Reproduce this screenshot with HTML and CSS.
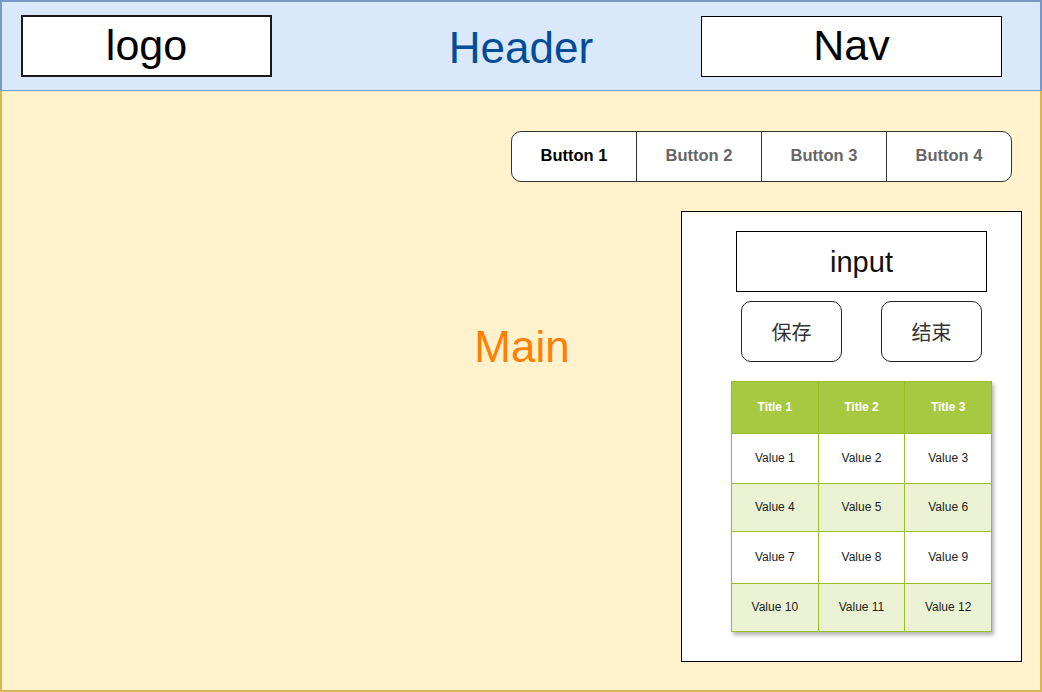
FILE: index.html
```html
<!DOCTYPE html>
<html lang="zh">
<head>
<meta charset="utf-8">
<title>Layout</title>
<link rel="stylesheet" href="styles.css">
</head>
<body>
<div class="page">
  <header class="header">
    <div class="logo">logo</div>
    <div class="title">Header</div>
    <div class="nav">Nav</div>
  </header>
  <main class="main">
    <div class="btn-group">
      <div class="seg seg-active">Button 1</div>
      <div class="seg">Button 2</div>
      <div class="seg">Button 3</div>
      <div class="seg">Button 4</div>
    </div>
    <div class="main-label">Main</div>
    <section class="panel">
      <div class="input">input</div>
      <div class="actions">
        <div class="action">保存</div>
        <div class="action">结束</div>
      </div>
      <table class="grid">
        <thead>
          <tr class="r-head"><th>Title 1</th><th>Title 2</th><th>Title 3</th></tr>
        </thead>
        <tbody>
          <tr class="r1"><td>Value 1</td><td>Value 2</td><td>Value 3</td></tr>
          <tr class="r2 alt"><td>Value 4</td><td>Value 5</td><td>Value 6</td></tr>
          <tr class="r3"><td>Value 7</td><td>Value 8</td><td>Value 9</td></tr>
          <tr class="r4 alt"><td>Value 10</td><td>Value 11</td><td>Value 12</td></tr>
        </tbody>
      </table>
    </section>
  </main>
</div>
</body>
</html>
```

FILE: styles.css
```css
* { box-sizing: border-box; }

html, body {
  margin: 0;
  padding: 0;
}

body {
  width: 1042px;
  height: 692px;
  overflow: hidden;
  font-family: "Liberation Sans", Arial, "Noto Sans CJK SC", sans-serif;
  background: #ffffff;
}

.page {
  width: 1042px;
  height: 692px;
  display: flex;
  flex-direction: column;
}

/* Header */
.header {
  height: 92px;
  flex: none;
  background: #dae8fc;
  border: 2px solid #7a98c6;
  display: grid;
  grid-template-columns: 251px 1fr 301px;
  align-items: center;
  padding: 0 38px 0 19px;
}

.logo {
  width: 251px;
  height: 62px;
  border: 2px solid #1a1a1a;
  background: #ffffff;
  display: flex;
  align-items: center;
  justify-content: center;
  font-size: 43px;
  line-height: 1;
  color: #000;
  padding-bottom: 2px;
}

.title {
  text-align: center;
  padding-left: 69px;
  font-size: 44px;
  line-height: 50px;
  color: #004c99;
  padding-top: 3px;
}

.nav {
  width: 301px;
  height: 61px;
  border: 1px solid #000;
  background: #ffffff;
  display: flex;
  align-items: center;
  justify-content: center;
  font-size: 43px;
  line-height: 1;
  color: #000;
  padding-bottom: 2px;
}

/* Main */
.main {
  flex: 1;
  margin-top: -1px;
  background: #fff2cc;
  border: 2px solid #d6b656;
  border-top: 0;
  display: grid;
  grid-template-columns: 1fr;
  grid-template-rows: auto 1fr;
  padding: 40px 18px 0 0;
  row-gap: 29px;
}

.btn-group {
  grid-row: 1;
  grid-column: 1;
  justify-self: end;
  margin-right: 10px;
  display: flex;
  height: 51px;
  border: 1px solid #333333;
  border-radius: 10px;
  background: #ffffff;
  overflow: hidden;
}

.seg {
  width: 125px;
  display: flex;
  align-items: center;
  justify-content: center;
  font-size: 16.5px;
  font-weight: bold;
  color: #666666;
  border-left: 1px solid #333333;
  padding-bottom: 2px;
}

.seg:first-child {
  border-left: 0;
  width: 124px;
}

.seg-active {
  color: #000000;
}

.main-label {
  grid-row: 2;
  grid-column: 1;
  justify-self: center;
  align-self: start;
  margin-left: 20px;
  margin-top: 111px;
  font-size: 44px;
  line-height: 50px;
  color: #ff8000;
}

.panel {
  grid-row: 2;
  grid-column: 1;
  justify-self: end;
  align-self: start;
  width: 341px;
  height: 451px;
  background: #ffffff;
  border: 1px solid #000000;
  padding: 19px 0 0 20px;
  display: flex;
  flex-direction: column;
  align-items: center;
}

.input {
  width: 251px;
  height: 61px;
  border: 1px solid #000000;
  display: flex;
  align-items: center;
  justify-content: center;
  font-size: 29px;
  color: #111111;
  padding-top: 2px;
}

.actions {
  margin-top: 9px;
  display: flex;
  gap: 39px;
}

.action {
  width: 101px;
  height: 61px;
  border: 1px solid #222222;
  border-radius: 10px;
  display: flex;
  align-items: center;
  justify-content: center;
  font-family: "Noto Sans CJK SC", "Liberation Sans", sans-serif;
  font-size: 20px;
  color: #333333;
}

.grid {
  margin-top: 19px;
  width: 261px;
  border-collapse: collapse;
  table-layout: fixed;
  font-size: 12px;
  color: #222222;
  box-shadow: 2px 3px 4px rgba(0, 0, 0, 0.3);
}

.grid th,
.grid td {
  border: 1px solid #98bf21;
  text-align: center;
  vertical-align: middle;
  padding: 0 0 2px 0;
}

.grid th {
  background: #a7c942;
  color: #ffffff;
  font-weight: bold;
}

.grid td {
  background: #ffffff;
}

.grid tr.alt td {
  background: #eaf2d3;
}

.r-head { height: 52px; }
.r1 { height: 50px; }
.r2 { height: 48px; }
.r3 { height: 52px; }
.r4 { height: 48px; }
```
